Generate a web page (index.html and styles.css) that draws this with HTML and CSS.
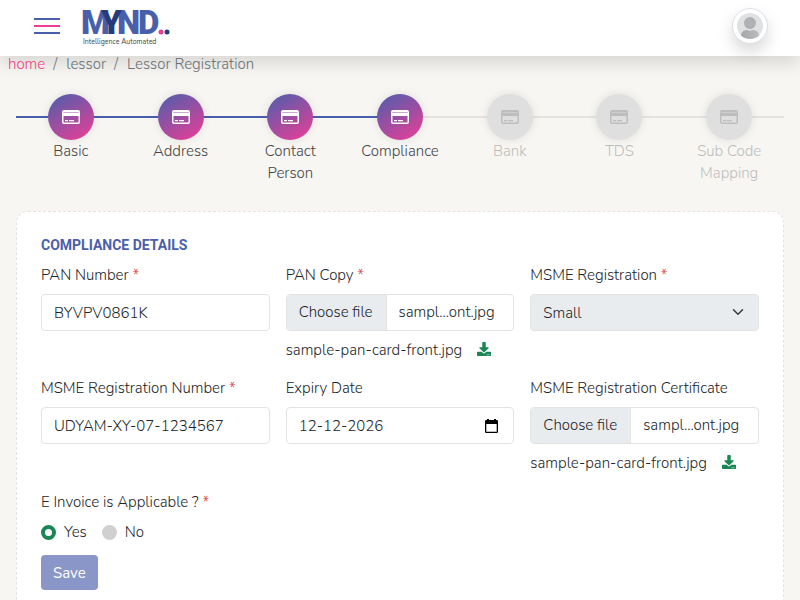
FILE: index.html
```html
<!DOCTYPE html>
<html lang="en">
<head>
<meta charset="utf-8">
<meta name="viewport" content="width=device-width, initial-scale=1">
<title>Lessor Registration</title>
<link rel="stylesheet" href="styles.css">
</head>
<body>
<svg class="sprite" aria-hidden="true">
  <symbol id="card" viewBox="0 0 18 14">
    <path fill-rule="evenodd" fill="currentColor" d="M2 0h14a2 2 0 0 1 2 2v10a2 2 0 0 1-2 2H2a2 2 0 0 1-2-2V2a2 2 0 0 1 2-2zM1.500 2v1h15V2zM1.500 6v6.500h15V6z"/>
    <path fill="currentColor" opacity=".5" d="M1.500 2h15v1h-15z"/>
    <path fill="currentColor" d="M3 10h3v1.300H3zM7 10h5v1.300H7z"/>
  </symbol>
  <symbol id="download" viewBox="0 0 512 512">
    <path fill="currentColor" d="M216 0h80c13.300 0 24 10.700 24 24v168h87.700c17.800 0 26.700 21.500 14.100 34.100L269.700 378.300c-7.500 7.500-19.800 7.500-27.300 0L90.100 226.100c-12.600-12.600-3.700-34.100 14.100-34.100H192V24c0-13.300 10.700-24 24-24zm296 376v112c0 13.300-10.700 24-24 24H24c-13.300 0-24-10.700-24-24V376c0-13.300 10.700-24 24-24h146.700l49 49c20.100 20.100 52.500 20.100 72.600 0l49-49H488c13.300 0 24 10.700 24 24zm-124 88c0-11-9-20-20-20s-20 9-20 20 9 20 20 20 20-9 20-20zm64 0c0-11-9-20-20-20s-20 9-20 20 9 20 20 20 20-9 20-20z"/>
  </symbol>
</svg>

<header class="topbar">
  <button class="menu" type="button" aria-label="Menu"><i></i><i></i><i></i></button>
  <a class="logo" href="#" aria-label="MYND">
    <svg width="90" height="38" viewBox="0 0 90 38">
      <g class="logo-word">
        <text x="-1" y="25">M</text><text x="35" y="25">N</text><text x="56" y="25">D</text>
        <text class="logo-dark" x="19" y="25">Y</text>
      </g>
      <circle cx="79" cy="23" r="2.500" fill="#ee3d96"/>
      <circle cx="85" cy="23" r="2.500" fill="#263c78"/>
      <text class="logo-tag" x="1" y="35">Intelligence Automated</text>
    </svg>
  </a>
  <button class="avatar" type="button" aria-label="Profile">
    <svg width="26" height="26" viewBox="0 0 26 26">
      <defs>
        <clipPath id="disc"><circle cx="13" cy="13" r="13"/></clipPath>
        <linearGradient id="skin"><stop offset="0" stop-color="#a5a6a9"/><stop offset="1" stop-color="#bcbdbf"/></linearGradient>
      </defs>
      <g clip-path="url(#disc)">
        <path fill="#e0e1e2" d="M0 0h26v26H0z"/>
        <circle cx="13" cy="10" r="6" fill="#b0b1b4"/>
        <path fill="url(#skin)" d="M4 26v-3c0-4 3-6 6-6 2 1 4 1 6 0 3 0 6 2 6 6v3z"/>
      </g>
    </svg>
  </button>
</header>

<nav aria-label="Breadcrumb">
  <ol class="crumbs">
    <li><a href="#">home</a></li>
    <li>lessor</li>
    <li>Lessor Registration</li>
  </ol>
</nav>

<main>
  <ol class="steps">
    <li class="step done"><span class="dot"><svg><use href="#card"/></svg></span><span>Basic</span></li>
    <li class="step done"><span class="dot"><svg><use href="#card"/></svg></span><span>Address</span></li>
    <li class="step done"><span class="dot"><svg><use href="#card"/></svg></span><span>Contact Person</span></li>
    <li class="step done current"><span class="dot"><svg><use href="#card"/></svg></span><span>Compliance</span></li>
    <li class="step"><span class="dot"><svg><use href="#card"/></svg></span><span>Bank</span></li>
    <li class="step"><span class="dot"><svg><use href="#card"/></svg></span><span>TDS</span></li>
    <li class="step"><span class="dot"><svg><use href="#card"/></svg></span><span>Sub Code Mapping</span></li>
  </ol>

  <form class="panel">
    <h2>COMPLIANCE DETAILS</h2>
    <div class="fields">
      <div class="field">
        <label for="pan">PAN Number <b>*</b></label>
        <input class="control" id="pan" type="text" value="BYVPV0861K">
      </div>
      <div class="field">
        <label for="pan-copy">PAN Copy <b>*</b></label>
        <div class="control file">
          <span class="file-button">Choose file</span><span class="file-name">sampl...ont.jpg</span>
          <input id="pan-copy" type="file">
        </div>
        <a class="download" href="#">sample-pan-card-front.jpg <svg><use href="#download"/></svg></a>
      </div>
      <div class="field">
        <label for="msme">MSME Registration <b>*</b></label>
        <div class="select">
          <select class="control" id="msme"><option>Small</option></select>
          <svg viewBox="0 0 16 16"><path d="M2 5l6 6 6-6" fill="none" stroke="#343a40" stroke-width="2" stroke-linecap="round" stroke-linejoin="round"/></svg>
        </div>
      </div>
      <div class="field">
        <label for="msme-no">MSME Registration Number <b>*</b></label>
        <input class="control" id="msme-no" type="text" value="UDYAM-XY-07-1234567">
      </div>
      <div class="field">
        <label for="expiry">Expiry Date</label>
        <div class="control date">
          <input id="expiry" type="text" value="12-12-2026">
          <button type="button" aria-label="Pick a date">
            <svg width="13" height="14" viewBox="0 0 13 14"><path fill-rule="evenodd" d="M2 0h2v1h5V0h2v1h.700A1.300 1.300 0 0 1 13 2.300v10.400a1.300 1.300 0 0 1-1.300 1.300H1.300A1.300 1.300 0 0 1 0 12.700V2.300A1.300 1.300 0 0 1 1.300 1H2zM1.300 5v7.700h10.400V5z"/></svg>
          </button>
        </div>
      </div>
      <div class="field">
        <label for="msme-cert">MSME Registration Certificate</label>
        <div class="control file">
          <span class="file-button">Choose file</span><span class="file-name">sampl...ont.jpg</span>
          <input id="msme-cert" type="file">
        </div>
        <a class="download" href="#">sample-pan-card-front.jpg <svg><use href="#download"/></svg></a>
      </div>
    </div>
    <fieldset>
      <legend>E Invoice is Applicable ? <b>*</b></legend>
      <div class="choices">
        <label><input type="radio" name="einvoice" checked>Yes</label>
        <label><input type="radio" name="einvoice">No</label>
      </div>
    </fieldset>
    <button class="save" type="submit">Save</button>
  </form>
</main>
</body>
</html>
```
FILE: styles.css
```css
* { box-sizing: border-box; }
body {
  margin: 0;
  background: #f7f6f2;
  color: #212529;
  font: 300 15px/22px Nunito, "Open Sans", sans-serif;
}
input, select, button { font: inherit; color: inherit; }
button { cursor: pointer; }
ol { list-style: none; margin: 0; padding: 0; }
.sprite { position: absolute; width: 0; height: 0; }

.topbar {
  position: relative;
  display: flex;
  align-items: center;
  height: 56px;
  padding: 0 32px 0 34px;
  background: #fff;
  box-shadow: 0 8px 16px rgba(0, 0, 0, .12);
}
.menu {
  display: grid;
  gap: 5px;
  width: 26px;
  margin: 0 22px 4px 0;
  padding: 0;
  border: 0;
  background: none;
}
.menu i { height: 2px; background: #4a5fac; }
.menu i:nth-child(2) { background: #ee3d96; }
.logo svg { display: block; overflow: visible; }
.logo-word { font: 900 33px Roboto, sans-serif; fill: #4a5fac; }
.logo-dark { fill: #263c78; }
.logo-tag { font: 400 7px/8px Nunito, sans-serif; fill: #444; }
.avatar {
  display: grid;
  place-items: center;
  width: 36px;
  height: 36px;
  margin: 0 0 4px auto;
  padding: 0;
  border: 1px solid #dddfe6;
  border-radius: 50%;
  background: #fff;
  box-shadow: 0 8px 16px rgba(0, 0, 0, .15);
}

.crumbs { display: flex; padding: 0 8px; margin-top: -3px; color: #6c757d; }
.crumbs li + li::before { content: "/"; padding: 0 9px 0 8px; }
.crumbs a { position: relative; color: #ee3d80; text-decoration: none; }

main { padding: 19px 16px 0; }
.steps { display: flex; }
.step {
  position: relative;
  flex: 1;
  display: flex;
  flex-direction: column;
  align-items: center;
  min-height: 90px;
  text-align: center;
  color: #bdbdbd;
}
.step::before {
  content: "";
  position: absolute;
  top: 22px;
  left: 0;
  right: 0;
  height: 2px;
  background: #e4e3df;
}
.done { color: #444; }
.done::before { background: #4a5fac; }
.current::before { background: linear-gradient(90deg, #4a5fac 50%, #e4e3df 50%); }
.step > span:last-child { max-width: 82px; }
.dot {
  position: relative;
  display: grid;
  place-items: center;
  width: 46px;
  height: 46px;
  border-radius: 50%;
  background: #dfdfdf;
  color: #bdbdbd;
  box-shadow: 0 0 10px rgba(0, 0, 0, .1);
}
.done .dot { background: linear-gradient(150deg, #4a5fac, #ee3d96); color: #fff; }
.dot svg { width: 18px; height: 14px; }

.panel {
  margin-top: 27px;
  padding: 22px 24px 32px;
  border: 1px dashed #e4e3df;
  border-radius: 12px;
  background: #fff;
}
h2 { margin: 0 0 8px; color: #4a5fac; font: 700 14px/22px Roboto, sans-serif; }
b { color: #dc3545; font-weight: inherit; }
.fields { display: grid; grid-template-columns: repeat(3, minmax(0, 1fr)); gap: 16px; }
.field { display: flex; flex-direction: column; gap: 8px; }
.control {
  width: 100%;
  height: 37px;
  padding: 0 12px;
  border: 1px solid #e4e3df;
  border-radius: 4px;
  background: #fff;
}
.file { position: relative; display: flex; align-items: stretch; padding: 0; overflow: hidden; line-height: 35px; white-space: nowrap; }
.file-button { padding: 0 13px 0 12px; border-right: 1px solid #e4e3df; background: #e9ecef; }
.file-name { padding: 0 12px; }
.file input { position: absolute; inset: 0; width: 100%; opacity: 0; }
.select { position: relative; }
.select select { appearance: none; background: #e9ecef; }
.select svg { position: absolute; top: 12px; right: 15px; width: 12px; height: 12px; pointer-events: none; }
.date { display: flex; align-items: center; justify-content: space-between; padding-right: 15px; }
.date input { min-width: 0; flex: 1; padding: 0; border: 0; outline: 0; background: none; }
.date button { display: grid; padding: 0; border: 0; background: none; }
.download { display: flex; align-items: center; gap: 15px; color: inherit; text-decoration: none; white-space: nowrap; }
.download svg { width: 14px; height: 14px; margin-bottom: 2px; color: #198754; }
fieldset { margin: 17px 0 12px; padding: 0; border: 0; }
legend { padding: 0; }
.choices { display: flex; gap: 15px; padding-top: 8px; }
.choices label { display: flex; align-items: center; gap: 8px; }
.choices input {
  appearance: none;
  width: 15px;
  height: 15px;
  margin: 0;
  border-radius: 50%;
  background: #d0d0d0;
}
.choices input:checked { border: 4px solid #198754; background: #fff; }
.save {
  height: 35px;
  padding: 0 12px;
  border: 0;
  border-radius: 4px;
  background: #8a95c8;
  color: #fff;
  font-weight: 400;
}
```
